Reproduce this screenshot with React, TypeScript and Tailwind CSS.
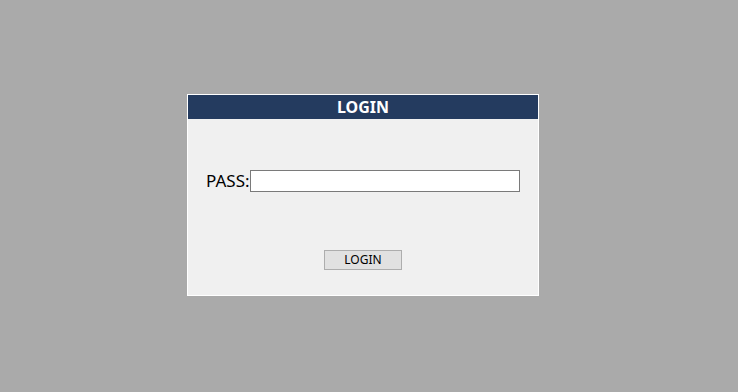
export default function App() {
  return (
    <div className="w-full h-screen bg-[#aaaaaa] pl-[187px] pt-[94px]">
      <div className="w-[352px] h-[202px] border border-white bg-[#f0f0f0] flex flex-col" style={{ fontFamily: '"Noto Sans", "Open Sans", sans-serif' }}>
        <div className="h-[24px] bg-[#243b5f] text-white font-bold text-[16px] leading-[24px] text-center">LOGIN</div>
        <div className="flex items-center pl-[18px] pr-[18px] mt-[51px] h-[22px]">
          <span className="text-[17px] leading-[22px] text-black w-[44px]">PASS:</span>
          <input type="password" className="flex-1 h-[22px] bg-white border border-[#7a7a7a] outline-none" />
        </div>
        <div className="flex justify-center mt-[58px]">
          <button className="w-[78px] h-[20px] bg-[#e1e1e1] border border-[#adadad] text-[12px] leading-[18px] text-black">LOGIN</button>
        </div>
      </div>
    </div>
  );
}
